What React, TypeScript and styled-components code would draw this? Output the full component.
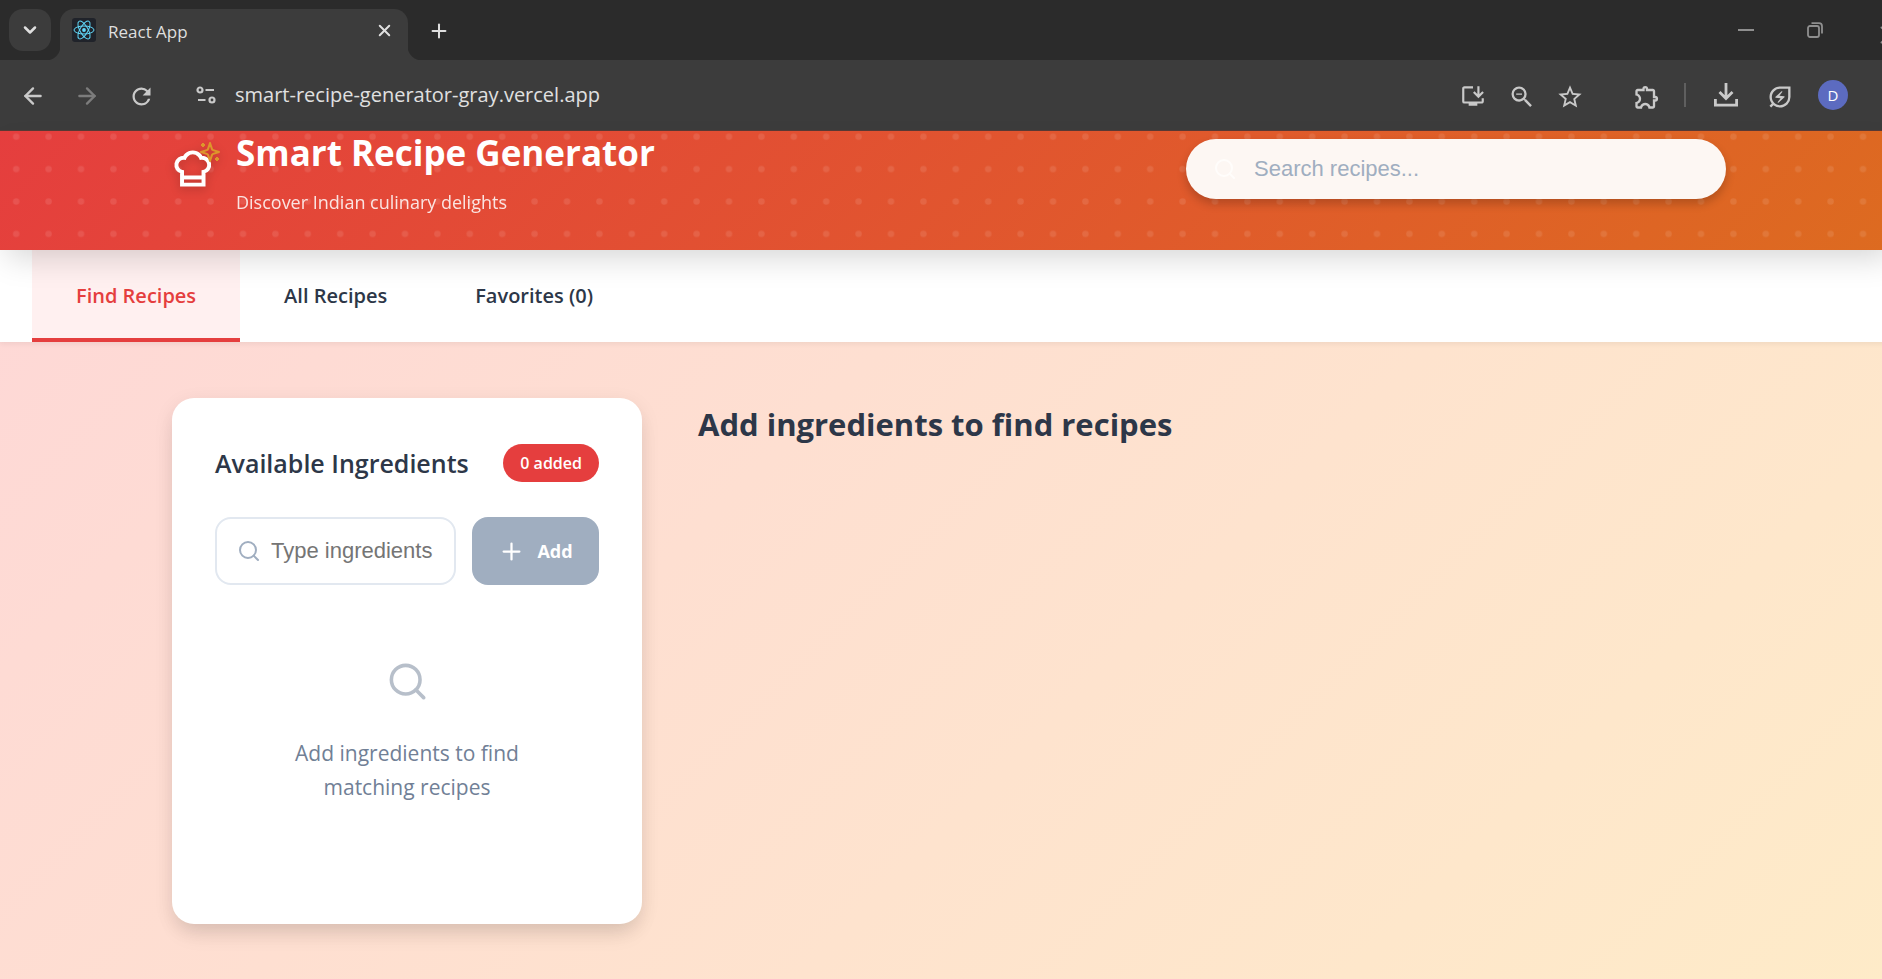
import React from 'react';
import styled, { createGlobalStyle } from 'styled-components';
import { ArrowLeft, ArrowRight, ChevronDown, Plus, Search, X } from 'lucide-react';
import {
  MdInstallDesktop,
  MdOutlineExtension,
  MdOutlineEnergySavingsLeaf,
  MdRefresh,
  MdStarBorder,
  MdZoomOut,
} from 'react-icons/md';

const uiFont = '"Open Sans", "Noto Sans", sans-serif';
const inputFont = '"Liberation Sans", Arial, sans-serif';

const GlobalStyle = createGlobalStyle`
  *, *::before, *::after { box-sizing: border-box; }
  body {
    margin: 0;
    overflow: hidden;
    font-family: ${uiFont};
    color: #2d3748;
    background: #fee1d0;
  }
  button, input { font: inherit; color: inherit; border: 0; padding: 0; margin: 0; background: none; }
  h1, h2, p { margin: 0; }
`;

const BrowserWindow = styled.div`
  display: flex;
  flex-direction: column;
  width: calc(100% + 16px);
  min-height: 100vh;
`;

const TabStrip = styled.div`
  display: flex;
  align-items: flex-end;
  height: 60px;
  padding-left: 9px;
  background: #2b2b2b;
  color: #dfdfdf;
`;

const TabSearch = styled.button`
  display: grid;
  place-items: center;
  width: 42px;
  height: 42px;
  margin-bottom: 9px;
  border-radius: 14px;
  background: #3c3c3c;
`;

const BrowserTab = styled.div`
  position: relative;
  display: flex;
  align-items: center;
  gap: 12px;
  width: 348px;
  height: 51px;
  margin-left: 9px;
  padding: 0 14px 9px 12px;
  border-radius: 14px 14px 0 0;
  background: #3c3c3c;
  font-size: 17px;

  &::before, &::after {
    content: '';
    position: absolute;
    bottom: 0;
    width: 14px;
    height: 14px;
  }
  &::before { right: 100%; background: radial-gradient(circle at 0 0, transparent 14px, #3c3c3c 15px); }
  &::after { left: 100%; background: radial-gradient(circle at 100% 0, transparent 14px, #3c3c3c 15px); }
`;

const TabTitle = styled.span`
  flex: 1;
  line-height: 24px;
  padding-top: 4px;
`;

const Favicon = styled.svg`
  width: 24px;
  height: 24px;
  border-radius: 3px;
  background: #20232a;
`;

const PlainButton = styled.button`
  display: grid;
  place-items: center;
  width: 20px;
  height: 20px;
`;

const NewTab = styled(PlainButton)`
  margin: 0 0 20px 20px;
`;

const WindowControls = styled.div`
  display: flex;
  align-items: center;
  gap: 49px;
  height: 60px;
  margin-left: auto;
  padding-right: 4px;
  color: #8f8f8f;
`;

const Toolbar = styled.div`
  display: flex;
  align-items: center;
  height: 71px;
  padding: 0 50px 0 20px;
  background: #3c3c3c;
  border-bottom: 1px solid #5a3a35;
  color: #c9c9c9;
`;

const NavButtons = styled.div`
  display: flex;
  gap: 30px;
`;

const ToolButton = styled.button<{ $dim?: boolean }>`
  display: grid;
  place-items: center;
  width: 24px;
  height: 24px;
  color: ${(p) => (p.$dim ? '#7c7c7c' : '#c9c9c9')};
`;

const AddressBar = styled.div`
  display: flex;
  flex: 1;
  align-items: center;
  gap: 17px;
  margin-left: 42px;
`;

const AddressInput = styled.input`
  flex: 1;
  font-size: 20px;
  line-height: 28px;
  color: #e0e0e0;
  outline: none;
`;

const AddressActions = styled.div`
  display: flex;
  gap: 24px;
`;

const ToolbarActions = styled.div`
  display: flex;
  align-items: center;
  gap: 28px;
  margin-left: 53px;
`;

const Separator = styled.span`
  width: 2px;
  height: 24px;
  margin-left: -1px;
  background: #5f5f5f;
`;

const Avatar = styled.button`
  width: 30px;
  height: 30px;
  border-radius: 50%;
  background: #5c6bc0;
  color: #fff;
  font-size: 15px;
  line-height: 30px;
`;

const Page = styled.div`
  display: flex;
  flex: 1;
  flex-direction: column;
  background: linear-gradient(135deg, #fed7d7 0%, #feebc8 100%);
`;

const Hero = styled.header`
  position: relative;
  z-index: 2;
  height: 119px;
  background: linear-gradient(135deg, #e53e3e 0%, #dd6b20 100%);
  box-shadow: 0 14px 30px -7px rgba(0, 0, 0, 0.17);
`;

const HeroDots = styled.svg`
  position: absolute;
  inset: 0;
  width: 100%;
  height: 100%;
`;

const HeroContent = styled.div`
  position: relative;
  display: flex;
  justify-content: space-between;
  align-items: flex-start;
  max-width: 1554px;
  margin: 0 auto;
  padding-top: 8px;
`;

const Brand = styled.div`
  display: flex;
  gap: 21px;
  color: #fff;
`;

const BrandLogo = styled.div`
  position: relative;
  padding-top: 8px;
  filter: drop-shadow(0 3px 5px rgba(0, 0, 0, 0.2));
`;

const Sparkle = styled.svg`
  position: absolute;
  top: 1px;
  right: -7px;
`;

const BrandTitle = styled.h1`
  margin-top: -12px;
  font-size: 35px;
  line-height: 52px;
  font-weight: 700;
`;

const BrandSubtitle = styled.p`
  margin-top: 9px;
  font-size: 18px;
  line-height: 28px;
  opacity: 0.85;
`;

const RecipeSearch = styled.label`
  display: flex;
  align-items: center;
  gap: 17px;
  width: 540px;
  height: 60px;
  padding: 0 27px;
  border-radius: 30px;
  background: #fdf7f3;
  color: #fffdfb;
  box-shadow: 0 5px 10px rgba(0, 0, 0, 0.2);
`;

const RecipeSearchInput = styled.input`
  flex: 1;
  min-width: 0;
  font-family: ${inputFont};
  font-size: 22px;
  line-height: 28px;
  color: #2d3748;
  outline: none;
  &::placeholder { color: #a0aec0; opacity: 1; }
`;

const PageNav = styled.nav`
  position: relative;
  z-index: 1;
  display: flex;
  height: 92px;
  padding: 0 32px;
  background: #fff;
  box-shadow: 0 2px 5px rgba(0, 0, 0, 0.06);
`;

const NavTab = styled.button<{ $active?: boolean }>`
  padding: 0 44px;
  font-size: 20px;
  line-height: 28px;
  font-weight: 600;
  color: ${(p) => (p.$active ? '#e53e3e' : '#2d3748')};
  background: ${(p) => (p.$active ? '#fff0f0' : 'transparent')};
  border-top: 4px solid transparent;
  border-bottom: 4px solid ${(p) => (p.$active ? '#e53e3e' : 'transparent')};
`;

const PageBody = styled.main`
  flex: 1;
  padding: 56px 0 48px;
`;

const Columns = styled.div`
  display: grid;
  grid-template-columns: 470px 1fr;
  gap: 56px;
  align-items: start;
  max-width: 1554px;
  margin: 0 auto;
`;

const Card = styled.section`
  padding: 46px 43px 120px;
  border-radius: 22px;
  background: #fff;
  box-shadow: 0 14px 22px -6px rgba(0, 0, 0, 0.1), 0 5px 20px rgba(0, 0, 0, 0.08);
`;

const CardHeader = styled.div`
  display: flex;
  justify-content: space-between;
  align-items: center;
`;

const CardTitle = styled.h2`
  font-size: 25px;
  line-height: 38px;
  font-weight: 600;
`;

const CountBadge = styled.span`
  padding: 0 17px;
  border-radius: 19px;
  background: #e53e3e;
  color: #fff;
  font-size: 16px;
  line-height: 38px;
  font-weight: 600;
`;

const IngredientForm = styled.form`
  display: flex;
  gap: 16px;
  margin-top: 35px;
`;

const IngredientField = styled.label`
  display: flex;
  flex: 1;
  align-items: center;
  gap: 10px;
  min-width: 0;
  height: 68px;
  padding: 0 20px;
  border: 2px solid #e2e8f0;
  border-radius: 16px;
  color: #a0aec0;
`;

const IngredientInput = styled.input`
  flex: 1;
  min-width: 0;
  font-family: ${inputFont};
  font-size: 22px;
  line-height: 28px;
  color: #2d3748;
  outline: none;
  &::placeholder { color: #757575; opacity: 1; }
`;

const AddButton = styled.button`
  display: flex;
  align-items: center;
  justify-content: center;
  gap: 12px;
  width: 127px;
  height: 68px;
  border-radius: 16px;
  background: #a0aec0;
  color: #fff;
  font-size: 18px;
  line-height: 24px;
  font-weight: 700;
`;

const EmptyState = styled.div`
  display: flex;
  flex-direction: column;
  align-items: center;
  gap: 33px;
  margin-top: 75px;
  color: #718096;
  text-align: center;
  font-size: 21px;
  line-height: 34px;

  svg { opacity: 0.5; }
  p { max-width: 240px; }
`;

const ResultsTitle = styled.h2`
  padding-top: 4px;
  font-size: 31px;
  line-height: 44px;
  font-weight: 700;
`;

function SiteSettingsIcon() {
  return (
    <svg width="20" height="20" viewBox="0 0 20 20" fill="none" stroke="currentColor" strokeWidth="2.2">
      <circle cx="4" cy="5" r="2.5" />
      <path d="M9.5 5H18M2 15h7.5" />
      <circle cx="16" cy="15" r="2.5" />
    </svg>
  );
}

function DownloadIcon() {
  return (
    <svg width="24" height="24" viewBox="0 0 24 24" fill="none" stroke="currentColor" strokeWidth="2.8">
      <path d="M12 0v15M5.5 9l6.5 6.5L18.5 9M1.4 16v6.2h21.2V16" />
    </svg>
  );
}

function ReactFavicon() {
  return (
    <Favicon viewBox="-12 -12 24 24" fill="none" stroke="#61dafb" strokeWidth="1" aria-hidden="true">
      <ellipse rx="10" ry="4" />
      <ellipse rx="10" ry="4" transform="rotate(60)" />
      <ellipse rx="10" ry="4" transform="rotate(120)" />
      <circle r="1.9" fill="#61dafb" stroke="none" />
    </Favicon>
  );
}

function ChefHatIcon() {
  return (
    <svg width="43" height="43" viewBox="0.4 0 24 24" fill="none" stroke="currentColor" strokeWidth="2.2">
      <path d="M6 13.87A4 4 0 0 1 7.41 6a5.11 5.11 0 0 1 1.05-1.54 5 5 0 0 1 7.08 0A5.11 5.11 0 0 1 16.59 6 4 4 0 0 1 18 13.87V21H6Z" />
      <path d="M6 17h12" />
    </svg>
  );
}

function SparkleIcon() {
  return (
    <Sparkle width="24" height="24" viewBox="0 0 24 24" fill="none" stroke="#dd962b" strokeWidth="2" strokeLinejoin="round">
      <path d="m12 3-1.912 5.813a2 2 0 0 1-1.275 1.275L3 12l5.813 1.912a2 2 0 0 1 1.275 1.275L12 21l1.912-5.813a2 2 0 0 1 1.275-1.275L21 12l-5.813-1.912a2 2 0 0 1-1.275-1.275L12 3Z" />
      <path d="M5 3v4M19 17v4M3 5h4M17 19h4" />
    </Sparkle>
  );
}

function RestoreIcon() {
  return (
    <svg width="16" height="16" viewBox="0 0 16 16" fill="none" stroke="currentColor" strokeWidth="1.8">
      <rect x="1" y="4" width="11" height="11" rx="2" />
      <path d="M4.5 1.2H12a3 3 0 0 1 3 3v7.3" />
    </svg>
  );
}

export default function App() {
  return (
    <BrowserWindow>
      <GlobalStyle />
      <TabStrip>
        <TabSearch aria-label="Search tabs"><ChevronDown size={20} strokeWidth={3} /></TabSearch>
        <BrowserTab>
          <ReactFavicon />
          <TabTitle>React App</TabTitle>
          <PlainButton aria-label="Close tab"><X size={19} strokeWidth={2.5} /></PlainButton>
        </BrowserTab>
        <NewTab aria-label="New tab"><Plus size={22} strokeWidth={2.2} /></NewTab>
        <WindowControls>
          <PlainButton aria-label="Minimize">
            <svg width="16" height="2"><path d="M0 1h16" stroke="currentColor" strokeWidth="2" /></svg>
          </PlainButton>
          <PlainButton aria-label="Restore"><RestoreIcon /></PlainButton>
          <PlainButton aria-label="Close window"><X size={30} strokeWidth={1.5} /></PlainButton>
        </WindowControls>
      </TabStrip>
      <Toolbar>
        <NavButtons>
          <ToolButton aria-label="Back"><ArrowLeft size={26} strokeWidth={2.2} /></ToolButton>
          <ToolButton aria-label="Forward" $dim><ArrowRight size={26} strokeWidth={2.2} /></ToolButton>
          <ToolButton aria-label="Reload"><MdRefresh size={27} /></ToolButton>
        </NavButtons>
        <AddressBar>
          <ToolButton aria-label="Site information"><SiteSettingsIcon /></ToolButton>
          <AddressInput aria-label="Address" defaultValue="smart-recipe-generator-gray.vercel.app" />
          <AddressActions>
            <ToolButton aria-label="Install app"><MdInstallDesktop size={26} /></ToolButton>
            <ToolButton aria-label="Zoom"><MdZoomOut size={28} /></ToolButton>
            <ToolButton aria-label="Bookmark"><MdStarBorder size={28} /></ToolButton>
          </AddressActions>
        </AddressBar>
        <ToolbarActions>
          <ToolButton aria-label="Extensions"><MdOutlineExtension size={28} /></ToolButton>
          <Separator />
          <ToolButton aria-label="Downloads"><DownloadIcon /></ToolButton>
          <ToolButton aria-label="Energy saver"><MdOutlineEnergySavingsLeaf size={28} /></ToolButton>
          <Avatar aria-label="Profile">D</Avatar>
        </ToolbarActions>
      </Toolbar>
      <Page>
        <Hero>
          <HeroDots aria-hidden="true">
            <defs>
              <pattern id="dots" width="32.4" height="32.4" y="-10.5" patternUnits="userSpaceOnUse">
                <circle cx="16.2" cy="16.2" r="3.2" fill="#fff" fillOpacity="0.1" />
              </pattern>
            </defs>
            <rect width="100%" height="100%" fill="url(#dots)" />
          </HeroDots>
          <HeroContent>
            <Brand>
              <BrandLogo>
                <SparkleIcon />
                <ChefHatIcon />
              </BrandLogo>
              <div>
                <BrandTitle>Smart Recipe Generator</BrandTitle>
                <BrandSubtitle>Discover Indian culinary delights</BrandSubtitle>
              </div>
            </Brand>
            <RecipeSearch>
              <Search size={24} strokeWidth={2} />
              <RecipeSearchInput type="text" aria-label="Search recipes" placeholder="Search recipes..." />
            </RecipeSearch>
          </HeroContent>
        </Hero>
        <PageNav>
          <NavTab $active>Find Recipes</NavTab>
          <NavTab>All Recipes</NavTab>
          <NavTab>Favorites (0)</NavTab>
        </PageNav>
        <PageBody>
          <Columns>
            <Card>
              <CardHeader>
                <CardTitle>Available Ingredients</CardTitle>
                <CountBadge>0 added</CountBadge>
              </CardHeader>
              <IngredientForm onSubmit={(event) => event.preventDefault()}>
                <IngredientField>
                  <Search size={24} strokeWidth={2} />
                  <IngredientInput type="text" aria-label="Ingredient" placeholder="Type ingredients" />
                </IngredientField>
                <AddButton type="submit"><Plus size={27} strokeWidth={2} />Add</AddButton>
              </IngredientForm>
              <EmptyState>
                <Search size={43} strokeWidth={2} />
                <p>Add ingredients to find matching recipes</p>
              </EmptyState>
            </Card>
            <ResultsTitle>Add ingredients to find recipes</ResultsTitle>
          </Columns>
        </PageBody>
      </Page>
    </BrowserWindow>
  );
}
